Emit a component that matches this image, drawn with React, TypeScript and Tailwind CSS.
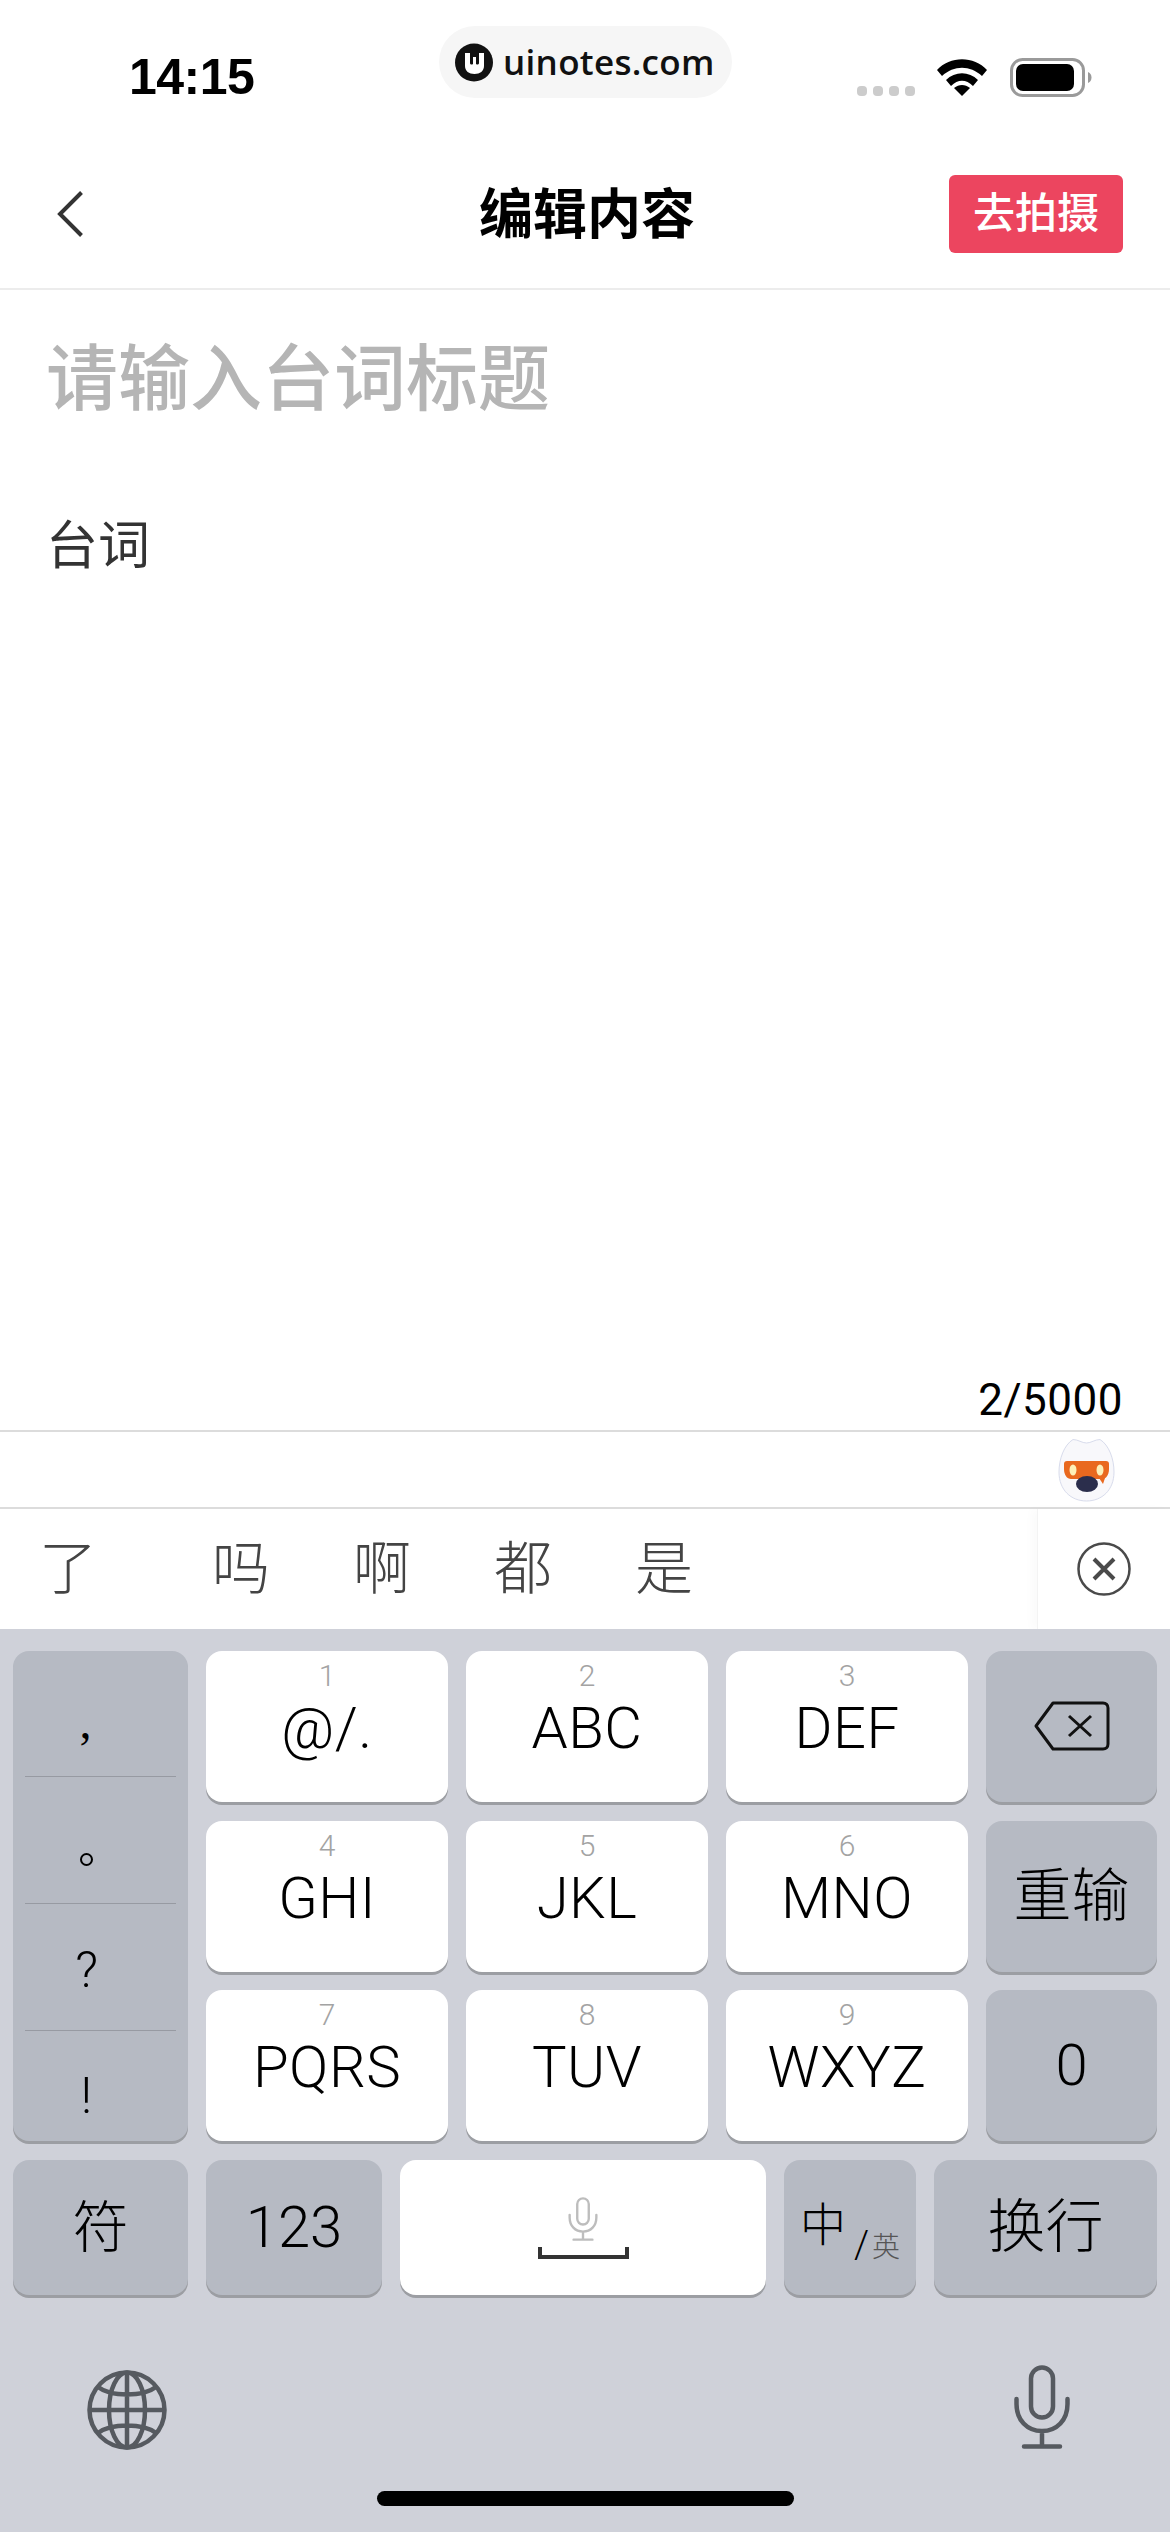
import React from 'react';

const Dots = () => (
  <div className="flex gap-[6px]">
    {[0, 1, 2, 3].map((d) => (
      <div key={d} className="h-[10px] w-[10px] rounded-[4px] bg-[#cccccc]" />
    ))}
  </div>
);

const Wifi = () => (
  <svg width="50" height="37" viewBox="0 0 50 37" fill="#000">
    <path d="M0 11C13-3.5 37-3.5 50 11L45 17C33 6 17 6 5 17Z" />
    <path d="M9 21C18 12 32 12 41 21L36 27C29 20 21 20 14 27Z" />
    <path d="M25 37L17 29C22 25 28 25 33 29Z" />
  </svg>
);

const Battery = () => (
  <svg width="82" height="39" viewBox="0 0 82 39">
    <rect x="1.5" y="1.5" width="72" height="36" rx="11" fill="none" stroke="#9a9a9a" strokeWidth="3" />
    <rect x="6" y="6" width="58" height="27" rx="7" fill="#000" />
    <path d="M78 14C80.500 15 81.500 17 81.500 19.500C81.500 22 80.500 24 78 25Z" fill="#9a9a9a" />
  </svg>
);

const Logo = () => (
  <svg width="38" height="39" viewBox="0 0 38 39">
    <circle cx="19" cy="19.500" r="19" fill="#111" />
    <path d="M10 10H15V20C15 21.500 16.500 22 18 21V14H21V21C22.500 22 24 21.500 24 20V10H29V23C29 28 25 31 19.500 31C14 31 10 28 10 23Z" fill="#fff" />
  </svg>
);

const Mascot = () => (
  <svg width="58" height="64" viewBox="0 0 58 64">
    <path
      d="M15 1.500C20 1.500 24 5 28.500 5C33 5 37 1.500 42 1.500C51 7 56 21 56 34C56 52 44 63 28.500 63C13 63 1 52 1 34C1 21 6 7 15 1.500Z"
      fill="#f8f8fb"
      stroke="#d8dcec"
    />
    <path d="M9 23H48C50 23 51 24 51 26V31C51 37 48 41 44 41H13C9 41 6 37 6 31V26C6 24 7 23 9 23Z" fill="#e9691f" />
    <path d="M41 40H47L45 46Z" fill="#e9691f" />
    <ellipse cx="15" cy="32" rx="3.500" ry="5.500" fill="#fdf0b8" />
    <ellipse cx="42" cy="32" rx="3.500" ry="5.500" fill="#fdf0b8" />
    <ellipse cx="29" cy="46" rx="11" ry="8" fill="#2b2e4c" />
  </svg>
);

const Clear = () => (
  <svg width="54" height="54" viewBox="0 0 54 54" fill="none" stroke="#4a4a4a">
    <circle cx="27" cy="27" r="25.500" strokeWidth="2.500" />
    <path d="M17 17L37 37M37 17L17 37" strokeWidth="4" />
  </svg>
);

const Backspace = () => (
  <svg width="76" height="50" viewBox="0 0 76 50" fill="none" stroke="#111">
    <path d="M19 2H69C72 2 74 4 74 7V43C74 46 72 48 69 48H19L2 25Z" strokeWidth="3" strokeLinejoin="round" />
    <path d="M35 15L57 35M57 15L35 35" strokeWidth="3" />
  </svg>
);

const Globe = () => (
  <svg width="80" height="80" viewBox="0 0 80 80" fill="none" stroke="#565a60" strokeWidth="4.500">
    <circle cx="40" cy="40" r="37.500" />
    <ellipse cx="40" cy="40" rx="18" ry="37.500" />
    <path d="M40 2.500V77.500M2.500 40H77.500M11 17C24 27 56 27 69 17M11 63C24 53 56 53 69 63" />
  </svg>
);

const Mic = ({ w, h, color, sw }: { w: number; h: number; color: string; sw: number }) => (
  <svg width={w} height={h} viewBox="0 0 56 84" fill="none" stroke={color} strokeWidth={sw} strokeLinecap="round">
    <rect x="17" y="2.500" width="22" height="50" rx="11" />
    <path d="M2.500 34V39C2.500 55 13 66 28 66C43 66 53.500 55 53.500 39V34M28 66V81M10 81.500H46" />
  </svg>
);

const Chevron = () => (
  <svg width="26" height="46" viewBox="0 0 26 46" fill="none" stroke="#333" strokeWidth="4">
    <path d="M24.500 1.500L3 23L24.500 44.500" />
  </svg>
);

const numKeys = [
  { n: '1', t: '@/.' },
  { n: '2', t: 'ABC' },
  { n: '3', t: 'DEF' },
  { n: '4', t: 'GHI' },
  { n: '5', t: 'JKL' },
  { n: '6', t: 'MNO' },
  { n: '7', t: 'PQRS' },
  { n: '8', t: 'TUV' },
  { n: '9', t: 'WXYZ' },
];

const NumKey = ({ n, t }: { n: string; t: string }) => (
  <div className="flex flex-col items-center rounded-[16px] bg-white pt-[10px] shadow-[0_3px_0_#9c9ea3]">
    <span className="text-[30px] leading-[30px] font-light text-[#a3a3a3]">{n}</span>
    <span className="mt-[9px] text-[58px] leading-[56px] font-light tracking-[0.5px] text-black">{t}</span>
  </div>
);

const GrayKey = ({ className = '', children }: { className?: string; children: React.ReactNode }) => (
  <div className={`flex items-center justify-center rounded-[16px] bg-[#b6bac3] text-black shadow-[0_3px_0_#9c9ea3] ${className}`}>
    {children}
  </div>
);

export default function App() {
  return (
    <div className="relative flex h-[2532px] w-[1170px] flex-col overflow-hidden bg-white font-['Roboto','Noto_Sans_CJK_SC',sans-serif]">
      {/* status bar */}
      <div className="flex h-[140px] shrink-0 items-start justify-between pt-[58px] pr-[78px] pl-[129px]">
        <span className="font-['Liberation_Sans',sans-serif] text-[50px] leading-[39px] font-bold tracking-[-0.5px] text-black">14:15</span>
        <div className="flex h-[39px] items-end">
          <div className="mb-[1px]"><Dots /></div>
          <div className="mr-[23px] ml-[22px] mb-[1px]"><Wifi /></div>
          <Battery />
        </div>
      </div>
      {/* uinotes watermark */}
      <div className="absolute top-[26px] left-[439px] flex h-[72px] w-[293px] items-center rounded-[36px] bg-[#f6f6f6] pl-[16px]">
        <Logo />
        <span className="ml-[10px] font-['Open_Sans',sans-serif] text-[35px] leading-[36px] font-semibold tracking-[0.3px] text-[#111]">uinotes.com</span>
      </div>

      {/* nav */}
      <div className="grid h-[150px] shrink-0 grid-cols-[1fr_auto_1fr] items-center border-b-[2px] border-[#ececec] pr-[47px] pl-[57px]">
        <Chevron />
        <span className="relative top-[2px] -left-[3px] text-[54px] leading-[60px] font-bold text-black">编辑内容</span>
        <div className="flex h-[78px] w-[174px] items-center justify-center justify-self-end rounded-[6px] bg-[#ec455f] pb-[1px] text-[42px] font-medium text-white">去拍摄</div>
      </div>

      {/* editor */}
      <div className="flex flex-1 flex-col pt-[50px] pr-[47px] pl-[46px]">
        <div className="text-[72px] leading-[80px] font-medium text-[#b5b5b5]">请输入台词标题</div>
        <div className="mt-[97px] text-[52px] leading-[60px] text-[#333]">台词</div>
        <div className="mt-auto self-end pb-[5px] text-[44px] leading-[50px] tracking-[0.5px] text-black">2/5000</div>
      </div>

      {/* toolbar */}
      <div className="flex h-[79px] shrink-0 items-center justify-end border-y-[2px] border-[#dcdcdc] pr-[54px]">
        <Mascot />
      </div>

      {/* candidates */}
      <div className="flex h-[120px] shrink-0 items-center justify-between pl-[39px] text-[58px] leading-[60px] font-light text-[#444]">
        <div className="flex">
          <span className="mr-[115px]">了</span>
          <div className="flex gap-[83px]">
            <span>吗</span>
            <span>啊</span>
            <span>都</span>
            <span>是</span>
          </div>
        </div>
        <div className="flex h-full w-[133px] items-center justify-center border-l border-[#f3f3f3] shadow-[-6px_0_8px_rgba(0,0,0,0.02)]">
          <Clear />
        </div>
      </div>

      {/* keyboard */}
      <div className="flex h-[903px] shrink-0 flex-col bg-[#cfd1d9] pt-[22px] pl-[13px]">
        <div className="grid grid-cols-[175px_242px_242px_242px_171px] grid-rows-[151px_151px_151px] gap-x-[18px] gap-y-[18.500px]">
          <div className="row-span-3 flex flex-col rounded-[16px] bg-[#b6bac3] px-[12px] text-black shadow-[0_3px_0_#9c9ea3]">
            <div className="flex h-[126px] items-end justify-center border-b border-[#979aa2] pr-[30px] pb-[30px] font-['Liberation_Serif',serif] text-[48px] leading-[48px]">,</div>
            <div className="flex h-[127px] items-center justify-center border-b border-[#979aa2] pt-[38px] pr-[28px]">
              <div className="h-[13px] w-[13px] rounded-full border-[2px] border-black" />
            </div>
            <div className="flex h-[127px] items-center justify-center border-b border-[#979aa2] pt-[6px] pr-[28px] text-[50px] leading-[50px] font-light">?</div>
            <div className="flex flex-1 items-center justify-center pt-[20px] pr-[28px] text-[50px] leading-[50px] font-light">!</div>
          </div>
          <NumKey {...numKeys[0]} />
          <NumKey {...numKeys[1]} />
          <NumKey {...numKeys[2]} />
          <GrayKey className="pb-[1px]"><Backspace /></GrayKey>
          <NumKey {...numKeys[3]} />
          <NumKey {...numKeys[4]} />
          <NumKey {...numKeys[5]} />
          <GrayKey className="text-[58px] font-light">重输</GrayKey>
          <NumKey {...numKeys[6]} />
          <NumKey {...numKeys[7]} />
          <NumKey {...numKeys[8]} />
          <GrayKey className="text-[58px] font-light">0</GrayKey>
        </div>

        <div className="mt-[19px] flex h-[135px] gap-[18px]">
          <GrayKey className="w-[175px] text-[56px] font-light">符</GrayKey>
          <GrayKey className="w-[176px] text-[58px] font-light">123</GrayKey>
          <div className="flex w-[366px] flex-col items-center rounded-[16px] bg-white pt-[37px] shadow-[0_3px_0_#9c9ea3]">
            <Mic w={30} h={44} color="#bdbdbd" sw={4.500} />
            <div className="mt-[6px] h-[12px] w-[91px] border-x-[4px] border-b-[4px] border-[#333]" />
          </div>
          <GrayKey className="w-[132px] items-end pb-[32px]">
            <span className="mb-[11px] text-[46px] leading-[54px] font-light">中</span>
            <span className="ml-[8px] text-[38px] leading-[36px] font-light">/</span>
            <span className="ml-[3px] text-[28px] leading-[30px] font-light text-[#555]">英</span>
          </GrayKey>
          <GrayKey className="w-[223px] text-[58px] font-light">换行</GrayKey>
        </div>

        <div className="mt-[70px] flex items-start justify-between pr-[100px] pl-[74px]">
          <div className="mt-[5px]"><Globe /></div>
          <Mic w={56} h={84} color="#565a60" sw={4.500} />
        </div>

        <div className="mt-[41px] ml-[364px] h-[15px] w-[417px] rounded-full bg-black" />
      </div>
    </div>
  );
}
